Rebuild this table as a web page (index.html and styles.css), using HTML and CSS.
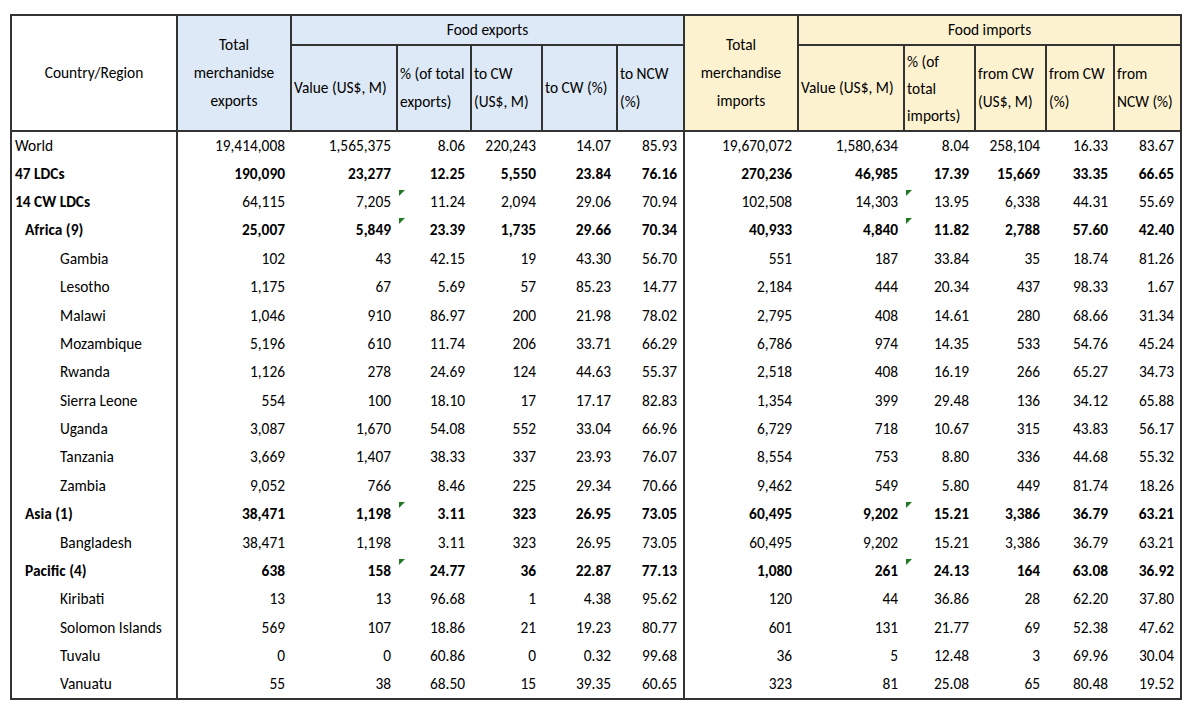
FILE: index.html
```html
<!DOCTYPE html>
<html>
<head>
<meta charset="utf-8">
<link rel="stylesheet" href="styles.css">
</head>
<body>
<table class="tbl">
  <colgroup>
    <col class="w-country"><col class="w-114"><col class="w-106"><col class="w-74"><col class="w-71"><col class="w-75"><col class="w-67">
    <col class="w-114"><col class="w-106"><col class="w-71"><col class="w-71"><col class="w-68"><col class="w-67">
  </colgroup>
  <thead>
    <tr class="hrow1">
      <th rowspan="2" class="hc plain">Country/Region</th>
      <th rowspan="2" class="hc blue ml">Total<br>merchanidse<br>exports</th>
      <th colspan="5" class="hc blue">Food exports</th>
      <th rowspan="2" class="hc yel ml divider">Total<br>merchandise<br>imports</th>
      <th colspan="5" class="hc yel">Food imports</th>
    </tr>
    <tr class="hrow2">
      <th class="hl blue">Value (US$, M)</th>
      <th class="hl blue">% (of total<br>exports)</th>
      <th class="hl blue">to CW<br>(US$, M)</th>
      <th class="hl blue">to CW (%)</th>
      <th class="hl blue">to NCW<br>(%)</th>
      <th class="hl yel">Value (US$, M)</th>
      <th class="hl yel tight">% (of<br>total<br>imports)</th>
      <th class="hl yel">from CW<br>(US$, M)</th>
      <th class="hl yel">from CW<br>(%)</th>
      <th class="hl yel">from<br>NCW (%)</th>
    </tr>
  </thead>
  <tbody>
    <tr><td class="lbl">World</td><td>19,414,008</td><td>1,565,375</td><td>8.06</td><td>220,243</td><td>14.07</td><td>85.93</td><td class="divider">19,670,072</td><td>1,580,634</td><td>8.04</td><td>258,104</td><td>16.33</td><td>83.67</td></tr>
    <tr class="bold"><td class="lbl">47 LDCs</td><td>190,090</td><td>23,277</td><td>12.25</td><td>5,550</td><td>23.84</td><td>76.16</td><td class="divider">270,236</td><td>46,985</td><td>17.39</td><td>15,669</td><td>33.35</td><td>66.65</td></tr>
    <tr><td class="lbl b">14 CW LDCs</td><td>64,115</td><td>7,205</td><td class="tri">11.24</td><td>2,094</td><td>29.06</td><td>70.94</td><td class="divider">102,508</td><td>14,303</td><td class="tri">13.95</td><td>6,338</td><td>44.31</td><td>55.69</td></tr>
    <tr class="bold"><td class="lbl reg">Africa (9)</td><td>25,007</td><td>5,849</td><td class="tri">23.39</td><td>1,735</td><td>29.66</td><td>70.34</td><td class="divider">40,933</td><td>4,840</td><td class="tri">11.82</td><td>2,788</td><td>57.60</td><td>42.40</td></tr>
    <tr><td class="lbl ctry">Gambia</td><td>102</td><td>43</td><td>42.15</td><td>19</td><td>43.30</td><td>56.70</td><td class="divider">551</td><td>187</td><td>33.84</td><td>35</td><td>18.74</td><td>81.26</td></tr>
    <tr><td class="lbl ctry">Lesotho</td><td>1,175</td><td>67</td><td>5.69</td><td>57</td><td>85.23</td><td>14.77</td><td class="divider">2,184</td><td>444</td><td>20.34</td><td>437</td><td>98.33</td><td>1.67</td></tr>
    <tr><td class="lbl ctry">Malawi</td><td>1,046</td><td>910</td><td>86.97</td><td>200</td><td>21.98</td><td>78.02</td><td class="divider">2,795</td><td>408</td><td>14.61</td><td>280</td><td>68.66</td><td>31.34</td></tr>
    <tr><td class="lbl ctry">Mozambique</td><td>5,196</td><td>610</td><td>11.74</td><td>206</td><td>33.71</td><td>66.29</td><td class="divider">6,786</td><td>974</td><td>14.35</td><td>533</td><td>54.76</td><td>45.24</td></tr>
    <tr><td class="lbl ctry">Rwanda</td><td>1,126</td><td>278</td><td>24.69</td><td>124</td><td>44.63</td><td>55.37</td><td class="divider">2,518</td><td>408</td><td>16.19</td><td>266</td><td>65.27</td><td>34.73</td></tr>
    <tr><td class="lbl ctry">Sierra Leone</td><td>554</td><td>100</td><td>18.10</td><td>17</td><td>17.17</td><td>82.83</td><td class="divider">1,354</td><td>399</td><td>29.48</td><td>136</td><td>34.12</td><td>65.88</td></tr>
    <tr><td class="lbl ctry">Uganda</td><td>3,087</td><td>1,670</td><td>54.08</td><td>552</td><td>33.04</td><td>66.96</td><td class="divider">6,729</td><td>718</td><td>10.67</td><td>315</td><td>43.83</td><td>56.17</td></tr>
    <tr><td class="lbl ctry">Tanzania</td><td>3,669</td><td>1,407</td><td>38.33</td><td>337</td><td>23.93</td><td>76.07</td><td class="divider">8,554</td><td>753</td><td>8.80</td><td>336</td><td>44.68</td><td>55.32</td></tr>
    <tr><td class="lbl ctry">Zambia</td><td>9,052</td><td>766</td><td>8.46</td><td>225</td><td>29.34</td><td>70.66</td><td class="divider">9,462</td><td>549</td><td>5.80</td><td>449</td><td>81.74</td><td>18.26</td></tr>
    <tr class="bold"><td class="lbl reg">Asia (1)</td><td>38,471</td><td>1,198</td><td class="tri">3.11</td><td>323</td><td>26.95</td><td>73.05</td><td class="divider">60,495</td><td>9,202</td><td class="tri">15.21</td><td>3,386</td><td>36.79</td><td>63.21</td></tr>
    <tr><td class="lbl ctry">Bangladesh</td><td>38,471</td><td>1,198</td><td>3.11</td><td>323</td><td>26.95</td><td>73.05</td><td class="divider">60,495</td><td>9,202</td><td>15.21</td><td>3,386</td><td>36.79</td><td>63.21</td></tr>
    <tr class="bold"><td class="lbl reg">Pacific (4)</td><td>638</td><td>158</td><td class="tri">24.77</td><td>36</td><td>22.87</td><td>77.13</td><td class="divider">1,080</td><td>261</td><td class="tri">24.13</td><td>164</td><td>63.08</td><td>36.92</td></tr>
    <tr><td class="lbl ctry">Kiribati</td><td>13</td><td>13</td><td>96.68</td><td>1</td><td>4.38</td><td>95.62</td><td class="divider">120</td><td>44</td><td>36.86</td><td>28</td><td>62.20</td><td>37.80</td></tr>
    <tr><td class="lbl ctry">Solomon Islands</td><td>569</td><td>107</td><td>18.86</td><td>21</td><td>19.23</td><td>80.77</td><td class="divider">601</td><td>131</td><td>21.77</td><td>69</td><td>52.38</td><td>47.62</td></tr>
    <tr><td class="lbl ctry">Tuvalu</td><td>0</td><td>0</td><td>60.86</td><td>0</td><td>0.32</td><td>99.68</td><td class="divider">36</td><td>5</td><td>12.48</td><td>3</td><td>69.96</td><td>30.04</td></tr>
    <tr><td class="lbl ctry">Vanuatu</td><td>55</td><td>38</td><td>68.50</td><td>15</td><td>39.35</td><td>60.65</td><td class="divider">323</td><td>81</td><td>25.08</td><td>65</td><td>80.48</td><td>19.52</td></tr>
  </tbody>
</table>
</body>
</html>
```

FILE: styles.css
```css
html, body {
  margin: 0;
  padding: 0;
  background: #ffffff;
}

body {
  padding: 14px 0 0 10px;
  font-family: "Carlito", "Lato", "Liberation Sans", sans-serif;
  font-size: 15.4px;
  color: #000000;
}

.tbl {
  border-collapse: collapse;
  table-layout: fixed;
  width: 1172px;
  border: 2px solid #333333;
}

.w-country { width: 166px; }
.w-114 { width: 114px; }
.w-106 { width: 106px; }
.w-75 { width: 75px; }
.w-74 { width: 74px; }
.w-71 { width: 71px; }
.w-68 { width: 68px; }
.w-67 { width: 67px; }

th {
  font-weight: normal;
  border: 2px solid #333333;
  padding: 0;
  vertical-align: middle;
}

.hrow1 { height: 28px; }
.hrow2 { height: 86px; }

.hc {
  text-align: center;
  line-height: 28px;
}

.hl {
  text-align: left;
  padding-left: 2px;
  line-height: 28px;
  white-space: nowrap;
}

.hl.tight { line-height: 27px; }

.plain { background: #ffffff; }
.blue { background: #dde9f6; }
.yel { background: #fdf2d0; }

tbody tr { height: 28.4px; }

td {
  padding: 0 6px 0 0;
  text-align: right;
  white-space: nowrap;
  line-height: 20px;
  border: none;
  vertical-align: middle;
}

td.lbl {
  text-align: left;
  padding-left: 3px;
  border-right: 2px solid #333333;
}

td.lbl.b { font-weight: bold; }
td.lbl.reg { padding-left: 13px; }
td.lbl.ctry { padding-left: 48px; }

tr.bold td { font-weight: bold; }

.divider { border-left: 2px solid #333333; }

td.tri { position: relative; }
td.tri::before {
  content: "";
  position: absolute;
  top: 2px;
  left: 2px;
  width: 0;
  height: 0;
  border-top: 6px solid #217a21;
  border-right: 6px solid transparent;
}
```
